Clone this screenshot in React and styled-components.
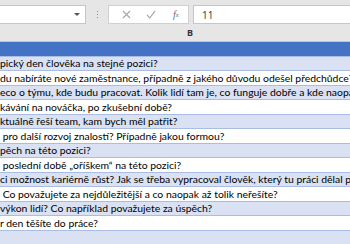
import React from 'react'
import styled, { createGlobalStyle } from 'styled-components'

const GlobalStyle = createGlobalStyle`
    html, body {
        margin: 0;
        padding: 0;
        background: #ffffff;
        overflow: hidden;
    }
    #root {
        width: 350px;
        height: 244px;
        overflow: hidden;
    }
`

const Sheet = styled.div`
    width: 350px;
    height: 244px;
    overflow: hidden;
    display: flex;
    flex-direction: column;
    background: #e6e6e6;
`

const Toolbar = styled.div`
    display: flex;
    align-items: flex-start;
    height: 28px;
    padding-top: 5px;
    box-sizing: border-box;
    background: #e6e6e6;
`

const NameBox = styled.div`
    position: relative;
    width: 87px;
    height: 19px;
    margin-left: -1px;
    box-sizing: border-box;
    background: #ffffff;
    border: 1px solid #c6c6c6;
`

const DropArrow = styled.span`
    position: absolute;
    right: 5px;
    top: 7px;
    width: 0;
    height: 0;
    border-left: 3px solid transparent;
    border-right: 3px solid transparent;
    border-top: 3px solid #555555;
`

const Grip = styled.div`
    width: 22px;
    height: 19px;
    display: flex;
    flex-direction: column;
    align-items: center;
    justify-content: center;
    gap: 2px;

    span {
        width: 1px;
        height: 1px;
        background: #8a8a8a;
    }
`

const ButtonBox = styled.div`
    width: 81px;
    height: 19px;
    box-sizing: border-box;
    background: #ffffff;
    border: 1px solid #d0d0d0;
    display: flex;
    align-items: center;
    padding-left: 9px;
    gap: 9px;
`

const IconSlot = styled.div`
    width: 16px;
    height: 17px;
    display: flex;
    align-items: center;
    justify-content: center;
    color: ${p => p.$color || '#a6a6a6'};
    font-family: "Liberation Serif", serif;
    font-style: italic;
    font-size: 10px;
`

const FormulaInput = styled.div`
    flex: 1;
    height: 19px;
    margin-left: 4px;
    margin-right: -2px;
    box-sizing: border-box;
    background: #ffffff;
    border: 1px solid #c6c6c6;
    display: flex;
    align-items: center;
    padding-left: 8px;
    font-family: "Noto Sans", "Liberation Sans", sans-serif;
    font-size: 10px;
    color: #444444;
`

const ColumnHeader = styled.div`
    height: 18px;
    display: flex;
    align-items: center;
    justify-content: center;
    padding-left: 30px;
    border-bottom: 1px solid #c4c4c4;
    font-family: "Noto Sans", "Liberation Sans", sans-serif;
    font-size: 9px;
    font-weight: 700;
    color: #333333;
`

const Rows = styled.div`
    display: flex;
    flex-direction: column;
    background: #ffffff;
`

const HeadRow = styled.div`
    height: 14px;
    background: #4472c4;
`

const Row = styled.div`
    height: 14.5px;
    box-sizing: border-box;
    display: flex;
    align-items: flex-end;
    padding-bottom: 1px;
    padding-left: ${p => p.$indent || 0}px;
    background: ${p => (p.$band ? '#d9e1f2' : '#ffffff')};
    border-top: 1px solid #a9bde3;
    font-family: Lato, "Liberation Sans", sans-serif;
    font-size: 10.4px;
    line-height: 12px;
    color: #000000;
    white-space: pre;
    overflow: hidden;
`

const lines = [
    { text: 'pický den člověka na stejné pozici?', indent: 0 },
    { text: 'du nabíráte nové zaměstnance, případně z jakého důvodu odešel předchůdce?', indent: 0 },
    { text: 'eco o týmu, kde budu pracovat. Kolik lidí tam je, co funguje dobře a kde naopak nefunguje?', indent: 0 },
    { text: 'kávání na nováčka, po zkušební době?', indent: 0 },
    { text: 'ktuálně řeší team, kam bych měl patřit?', indent: 0 },
    { text: ' pro další rozvoj znalostí? Případně jakou formou?', indent: 0 },
    { text: 'pěch na této pozici?', indent: 0 },
    { text: ' poslední době „oříškem“ na této pozici?', indent: 0 },
    { text: 'ci možnost kariérně růst? Jak se třeba vypracoval člověk, který tu práci dělal před vámi?', indent: 0 },
    { text: ' Co považujete za nejdůležitější a co naopak až tolik neřešíte?', indent: 0 },
    { text: 'výkon lidí? Co například považujete za úspěch?', indent: 0 },
    { text: 'r den těšíte do práce?', indent: 0 },
    { text: '', indent: 0 },
]

function App () {
    return (
        <Sheet>
            <GlobalStyle />
            <Toolbar>
                <NameBox>
                    <DropArrow />
                </NameBox>
                <Grip>
                    <span /><span /><span />
                </Grip>
                <ButtonBox>
                    <IconSlot>
                        <svg width="9" height="9" viewBox="0 0 9 9">
                            <path d="M1 1 L8 8 M8 1 L1 8" stroke="#a6a6a6" strokeWidth="1.1" fill="none" />
                        </svg>
                    </IconSlot>
                    <IconSlot>
                        <svg width="10" height="9" viewBox="0 0 10 9">
                            <path d="M1 5 L3.8 7.8 L9 1.2" stroke="#a6a6a6" strokeWidth="1.1" fill="none" />
                        </svg>
                    </IconSlot>
                    <IconSlot $color="#6a6a6a">
                        f<sub style={{ fontSize: '7px' }}>x</sub>
                    </IconSlot>
                </ButtonBox>
                <FormulaInput>11</FormulaInput>
            </Toolbar>
            <ColumnHeader>B</ColumnHeader>
            <Rows>
                <HeadRow />
                {lines.map((line, i) => (
                    <Row key={i} $band={i % 2 === 0} $indent={line.indent}>
                        {line.text}
                    </Row>
                ))}
            </Rows>
        </Sheet>
    )
}

export default App
